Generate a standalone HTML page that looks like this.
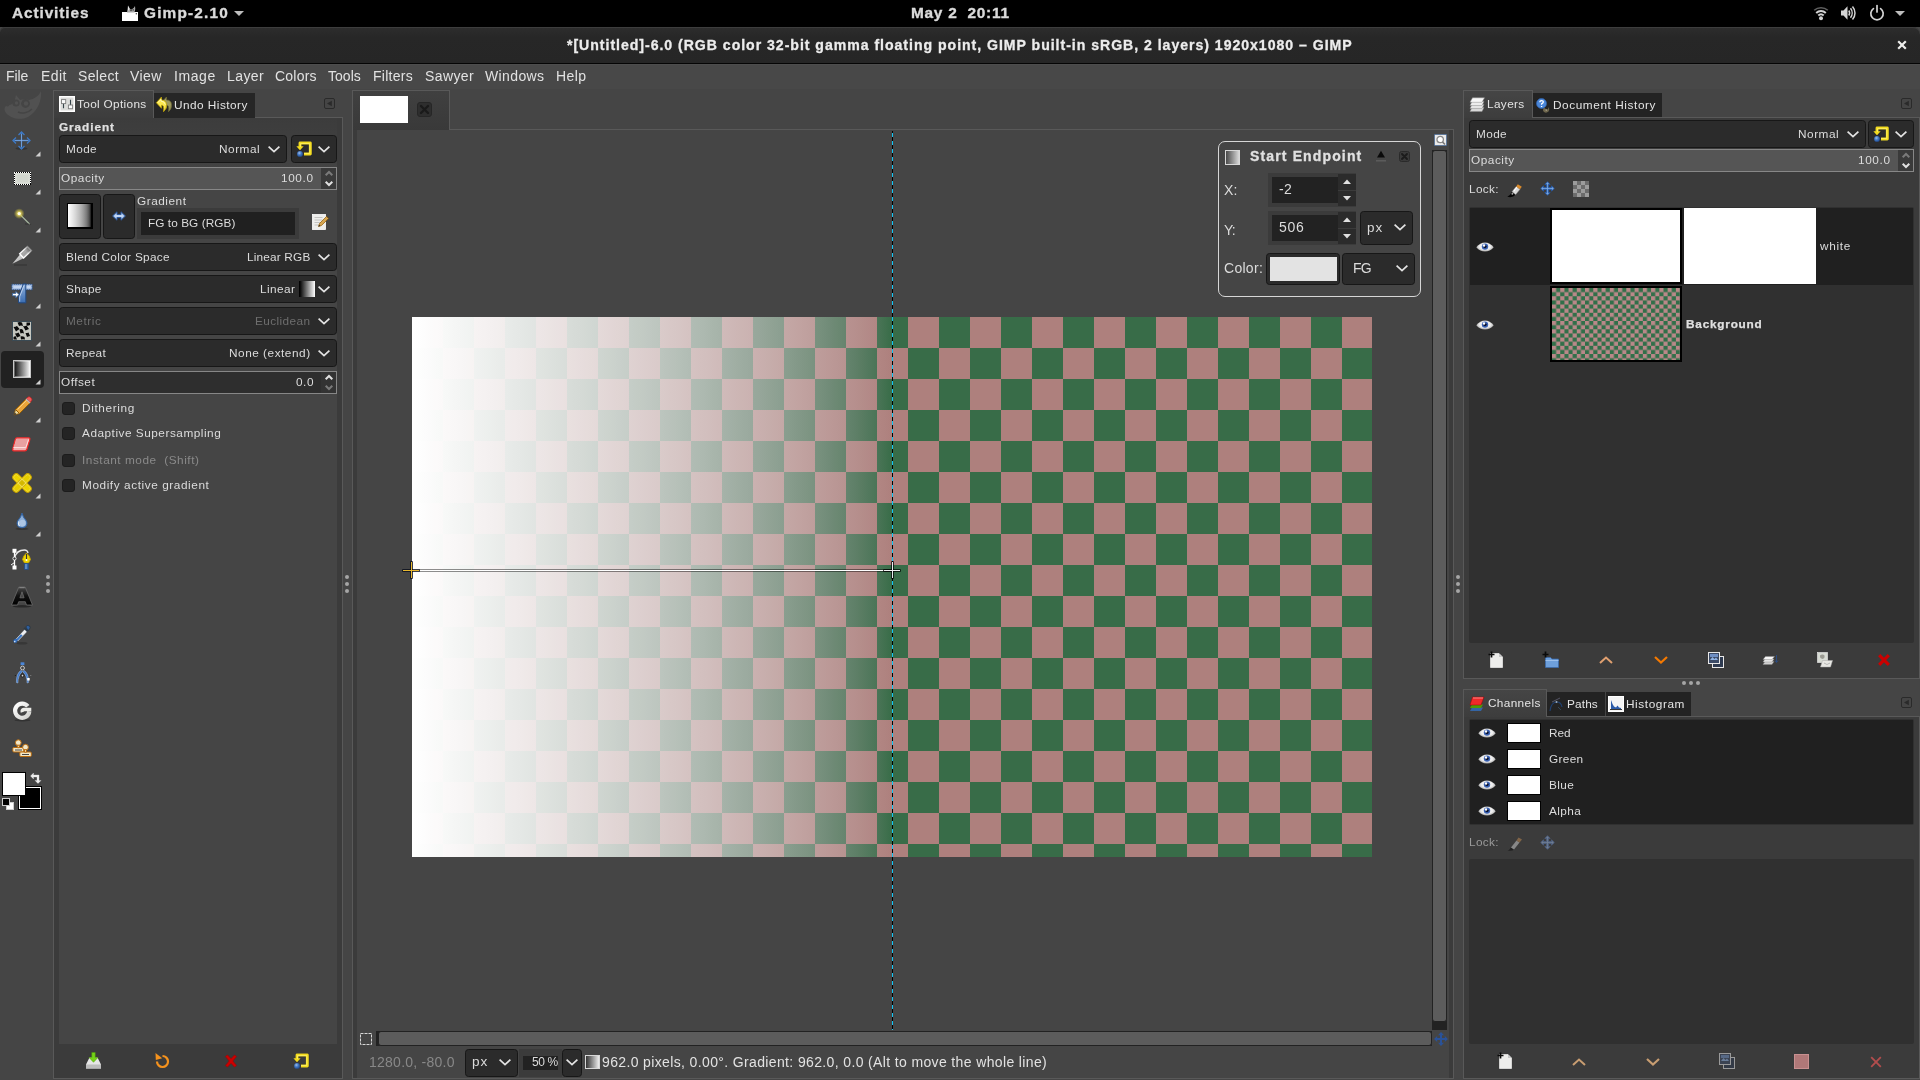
<!DOCTYPE html>
<html><head><meta charset="utf-8"><title>GIMP</title>
<style>
html,body{margin:0;padding:0;}
body{width:1920px;height:1080px;overflow:hidden;background:#454545;position:relative;font-family:"Liberation Sans",sans-serif;}
div,span.t,svg{position:absolute;box-sizing:border-box;}
span.t{white-space:pre;will-change:transform;}
svg{overflow:visible;}
.pk{background:linear-gradient(90deg,rgb(255,255,255) 0px,rgb(254,254,254) 6px,rgb(253,253,253) 12px,rgb(252,251,251) 18px,rgb(252,250,250) 24px,rgb(251,249,249) 30px,rgb(250,248,248) 36px,rgb(249,247,247) 42px,rgb(248,246,246) 48px,rgb(247,245,245) 54px,rgb(247,244,243) 60px,rgb(246,242,242) 66px,rgb(245,241,241) 72px,rgb(244,240,240) 78px,rgb(243,239,239) 84px,rgb(242,238,237) 90px,rgb(241,236,236) 96px,rgb(241,235,235) 102px,rgb(240,234,234) 108px,rgb(239,233,232) 114px,rgb(238,231,231) 120px,rgb(237,230,230) 126px,rgb(236,229,229) 132px,rgb(235,228,227) 138px,rgb(234,226,226) 144px,rgb(234,225,225) 150px,rgb(233,224,223) 156px,rgb(232,223,222) 162px,rgb(231,221,221) 168px,rgb(230,220,219) 174px,rgb(229,219,218) 180px,rgb(228,217,217) 186px,rgb(227,216,215) 192px,rgb(226,214,214) 198px,rgb(225,213,212) 204px,rgb(224,212,211) 210px,rgb(223,210,210) 216px,rgb(222,209,208) 222px,rgb(221,207,207) 228px,rgb(220,206,205) 234px,rgb(219,204,204) 240px,rgb(218,203,202) 246px,rgb(217,202,201) 252px,rgb(216,200,199) 258px,rgb(215,199,198) 264px,rgb(214,197,196) 270px,rgb(213,195,194) 276px,rgb(212,194,193) 282px,rgb(211,192,191) 288px,rgb(210,191,190) 294px,rgb(209,189,188) 300px,rgb(208,187,186) 306px,rgb(207,186,185) 312px,rgb(206,184,183) 318px,rgb(205,182,181) 324px,rgb(204,181,179) 330px,rgb(203,179,178) 336px,rgb(202,177,176) 342px,rgb(201,175,174) 348px,rgb(199,174,172) 354px,rgb(198,172,170) 360px,rgb(197,170,168) 366px,rgb(196,168,166) 372px,rgb(195,166,164) 378px,rgb(194,164,162) 384px,rgb(193,162,160) 390px,rgb(191,160,158) 396px,rgb(190,158,156) 402px,rgb(189,156,154) 408px,rgb(188,154,152) 414px,rgb(187,152,150) 420px,rgb(185,150,148) 426px,rgb(184,148,145) 432px,rgb(183,145,143) 438px,rgb(182,143,141) 444px,rgb(180,141,138) 450px,rgb(179,138,136) 456px,rgb(178,136,133) 462px,rgb(177,133,130) 468px,rgb(175,131,128) 474px,rgb(174,128,125) 480px,rgb(174,128,125) 481px);}
.gr{background:linear-gradient(90deg,rgb(255,255,255) 0px,rgb(253,254,253) 6px,rgb(252,252,252) 12px,rgb(251,251,251) 18px,rgb(249,250,249) 24px,rgb(248,249,248) 30px,rgb(247,248,247) 36px,rgb(245,246,245) 42px,rgb(244,245,244) 48px,rgb(242,244,243) 54px,rgb(241,243,241) 60px,rgb(239,241,240) 66px,rgb(238,240,238) 72px,rgb(236,239,237) 78px,rgb(235,237,235) 84px,rgb(233,236,234) 90px,rgb(232,235,233) 96px,rgb(230,233,231) 102px,rgb(229,232,230) 108px,rgb(227,231,228) 114px,rgb(226,229,227) 120px,rgb(224,228,225) 126px,rgb(223,227,223) 132px,rgb(221,225,222) 138px,rgb(219,224,220) 144px,rgb(218,222,219) 150px,rgb(216,221,217) 156px,rgb(214,219,215) 162px,rgb(213,218,214) 168px,rgb(211,217,212) 174px,rgb(209,215,211) 180px,rgb(207,214,209) 186px,rgb(206,212,207) 192px,rgb(204,211,205) 198px,rgb(202,209,204) 204px,rgb(200,207,202) 210px,rgb(198,206,200) 216px,rgb(196,204,198) 222px,rgb(195,203,196) 228px,rgb(193,201,195) 234px,rgb(191,199,193) 240px,rgb(189,198,191) 246px,rgb(187,196,189) 252px,rgb(185,194,187) 258px,rgb(183,193,185) 264px,rgb(180,191,183) 270px,rgb(178,189,181) 276px,rgb(176,187,179) 282px,rgb(174,186,177) 288px,rgb(172,184,175) 294px,rgb(169,182,172) 300px,rgb(167,180,170) 306px,rgb(165,178,168) 312px,rgb(162,176,166) 318px,rgb(160,174,163) 324px,rgb(157,172,161) 330px,rgb(155,170,159) 336px,rgb(152,168,156) 342px,rgb(150,166,154) 348px,rgb(147,164,151) 354px,rgb(144,162,148) 360px,rgb(141,160,146) 366px,rgb(138,158,143) 372px,rgb(135,156,140) 378px,rgb(132,153,137) 384px,rgb(129,151,134) 390px,rgb(126,149,131) 396px,rgb(122,146,128) 402px,rgb(119,144,125) 408px,rgb(115,141,122) 414px,rgb(111,138,118) 420px,rgb(107,136,114) 426px,rgb(103,133,111) 432px,rgb(98,130,107) 438px,rgb(94,127,103) 444px,rgb(89,124,98) 450px,rgb(83,121,94) 456px,rgb(78,118,89) 462px,rgb(71,115,84) 468px,rgb(64,112,78) 474px,rgb(56,108,72) 480px,rgb(56,108,72) 481px);-webkit-mask-image:repeating-conic-gradient(#000 0 25%,transparent 0 50%);mask-image:repeating-conic-gradient(#000 0 25%,transparent 0 50%);-webkit-mask-size:62px 62px;mask-size:62px 62px;}
</style></head><body>
<div style="left:0px;top:0px;width:1920px;height:27px;background:#000;"></div>
<span class="t" style="top:3.00px;font-size:15.4px;line-height:20px;color:#dadada;letter-spacing:0.891px;font-weight:bold;-webkit-text-stroke:0.35px #dadada;left:12px;">Activities</span>
<span class="t" style="top:3.00px;font-size:15.4px;line-height:20px;color:#dadada;letter-spacing:1.182px;font-weight:bold;-webkit-text-stroke:0.35px #dadada;left:144px;">Gimp-2.10</span>
<span class="t" style="top:3.00px;font-size:15.4px;line-height:20px;color:#dadada;letter-spacing:0.742px;font-weight:bold;-webkit-text-stroke:0.35px #dadada;left:910.62px;">May 2  20:11</span>
<svg style="left:122px;top:5px;" width="17" height="17" viewBox="0 0 17 17"><path d="M0 7h16v9H0z" fill="#fff"/><path d="M5 7.500q0-2.500 3-3.500l1.500.5q2.500-1 3.500-3.500.8 3-.5 6.500z" fill="#a8a8a8"/><path d="M6 .5l2 3.500-2.500 2.200z" fill="#e8e8e8"/><circle cx="9" cy="5.300" r="1" fill="#555"/><circle cx="11.200" cy="4.800" r=".9" fill="#555"/><circle cx="14.300" cy="8.700" r=".7" fill="#333"/></svg>
<svg style="left:234px;top:11px;" width="10" height="5" viewBox="0 0 10 5"><path d="M0 0h10l-5 5z" fill="#bdbdbd"/></svg>
<svg style="left:1813px;top:6px;" width="16" height="14" viewBox="0 0 16 14"><path d="M1.200 4.300a10 10 0 0 1 13.600 0" fill="none" stroke="#d4d4d4" stroke-width="1.500" opacity=".45"/><path d="M3.200 7a7 7 0 0 1 9.600 0" fill="none" stroke="#d4d4d4" stroke-width="2"/><path d="M5.300 9.500a4 4 0 0 1 5.400 0" fill="none" stroke="#d4d4d4" stroke-width="2"/><circle cx="8" cy="12.300" r="2" fill="#d4d4d4"/></svg>
<svg style="left:1841px;top:5px;" width="16" height="16" viewBox="0 0 16 16"><path d="M0 5.500h2.500l4-4.200v13.400l-4-4.200H0z" fill="#d4d4d4"/><path d="M7.800 5.500a4.500 4.500 0 0 1 0 5M9.500 3.300a7.500 7.500 0 0 1 0 9.400M11.500 1.400a10 10 0 0 1 0 13.200" fill="none" stroke="#d4d4d4" stroke-width="1.500"/></svg>
<svg style="left:1869px;top:5px;" width="16" height="16" viewBox="0 0 16 16"><path d="M4.400 3.600a6.200 6.200 0 1 0 7.200 0" fill="none" stroke="#d4d4d4" stroke-width="1.700" stroke-linecap="round"/><path d="M8 .6v6.400" stroke="#d4d4d4" stroke-width="1.700" stroke-linecap="round"/></svg>
<svg style="left:1895px;top:11px;" width="10" height="5" viewBox="0 0 10 5"><path d="M0 0h10l-5 5z" fill="#bdbdbd"/></svg>
<div style="left:0px;top:27px;width:1920px;height:37px;background:linear-gradient(#2d2d2d,#272727 30%,#262626);border-top-left-radius:5px;border-top-right-radius:7px;border-bottom:1px solid #050505;box-shadow:inset 0 1px 0 #3d3d3d;"></div>
<span class="t" style="top:35.00px;font-size:14.1px;line-height:20px;color:#ececec;letter-spacing:0.971px;font-weight:bold;-webkit-text-stroke:0.3px #ececec;left:567.18px;">*[Untitled]-6.0 (RGB color 32-bit gamma floating point, GIMP built-in sRGB, 2 layers) 1920x1080 – GIMP</span>
<svg style="left:1897px;top:40px;" width="10" height="10" viewBox="0 0 10 10"><path d="M1.2 1.2l7.6 7.6M8.8 1.2l-7.6 7.6" stroke="#eeeeec" stroke-width="2.2" stroke-linecap="butt"/></svg>
<div style="left:0px;top:64px;width:1920px;height:25px;background:#484848;border-top:1px solid #4d4d4d;"></div>
<span class="t" style="top:66.00px;font-size:14px;line-height:20px;color:#e2e2e2;letter-spacing:-0.062px;left:6px;">File</span>
<span class="t" style="top:66.00px;font-size:14px;line-height:20px;color:#e2e2e2;letter-spacing:0.422px;left:41px;">Edit</span>
<span class="t" style="top:66.00px;font-size:14px;line-height:20px;color:#e2e2e2;letter-spacing:0.367px;left:78px;">Select</span>
<span class="t" style="top:66.00px;font-size:14px;line-height:20px;color:#e2e2e2;letter-spacing:0.387px;left:130px;">View</span>
<span class="t" style="top:66.00px;font-size:14px;line-height:20px;color:#e2e2e2;letter-spacing:0.566px;left:174px;">Image</span>
<span class="t" style="top:66.00px;font-size:14px;line-height:20px;color:#e2e2e2;letter-spacing:0.428px;left:227px;">Layer</span>
<span class="t" style="top:66.00px;font-size:14px;line-height:20px;color:#e2e2e2;letter-spacing:0.214px;left:275px;">Colors</span>
<span class="t" style="top:66.00px;font-size:14px;line-height:20px;color:#e2e2e2;letter-spacing:0.031px;left:328px;">Tools</span>
<span class="t" style="top:66.00px;font-size:14px;line-height:20px;color:#e2e2e2;letter-spacing:0.261px;left:373px;">Filters</span>
<span class="t" style="top:66.00px;font-size:14px;line-height:20px;color:#e2e2e2;letter-spacing:0.404px;left:425px;">Sawyer</span>
<span class="t" style="top:66.00px;font-size:14px;line-height:20px;color:#e2e2e2;letter-spacing:0.386px;left:485px;">Windows</span>
<span class="t" style="top:66.00px;font-size:14px;line-height:20px;color:#e2e2e2;letter-spacing:0.398px;left:556px;">Help</span>
<svg style="left:2px;top:90px;" width="42" height="30" viewBox="0 0 42 30"><g fill="#515151"><path d="M39 1c1 9-3 20-13 26-8 4-18 1-22-4-3-4-1-8 3-8 3 0 5-3 6-6l1-4 4 5c3-1 6-1 9 0 5-1 10-4 12-9z"/></g><g fill="#454545"><circle cx="14" cy="13" r="3.6"/><circle cx="23.5" cy="13.5" r="4.4"/><circle cx="5.5" cy="14.5" r="2"/></g><g fill="#515151"><circle cx="14.5" cy="13" r="1.7"/><circle cx="24" cy="13.5" r="2.2"/></g><path d="M16 22c4 2 10 1 14-3" stroke="#454545" stroke-width="1.6" fill="none"/></svg>
<svg style="left:12px;top:131px;" width="19" height="19" viewBox="0 0 19 19"><ellipse cx="9.5" cy="17.6" rx="6" ry="1.4" fill="#2a2a2a" opacity=".6"/><g fill="none" stroke="#3d78c4" stroke-width="1.3" stroke-linejoin="miter"><path d="M9.5 1v17M1 9.5h17"/><path d="M6.5 4l3-3 3 3M6.5 15l3 3 3-3M4 6.5l-3 3 3 3M15 6.5l3 3-3 3"/></g><g stroke="#9cc0ee" stroke-width=".5" fill="none"><path d="M9.5 3v13M3 9.5h13"/></g></svg>
<svg style="left:34.8px;top:150.8px;" width="6" height="6" viewBox="0 0 6 6"><path d="M5.5 0.5v5h-5z" fill="#d0d0d0"/></svg>
<svg style="left:14px;top:172px;" width="17" height="13" viewBox="0 0 17 13"><g shape-rendering="crispEdges"><rect x="1" y="1" width="15" height="11" fill="#d3d7cf"/><rect x=".5" y=".5" width="16" height="12" fill="none" stroke="#fff" stroke-width="1"/><rect x=".5" y=".5" width="16" height="12" fill="none" stroke="#000" stroke-width="1" stroke-dasharray="1 1"/></g><rect x="2" y="2" width="13" height="9" fill="none" stroke="#eef0ea" stroke-width=".8" opacity=".6"/></svg>
<svg style="left:34.8px;top:188.8px;" width="6" height="6" viewBox="0 0 6 6"><path d="M5.5 0.5v5h-5z" fill="#d0d0d0"/></svg>
<svg style="left:12px;top:206px;" width="20" height="20" viewBox="0 0 20 20"><defs><radialGradient id="wg"><stop offset="0" stop-color="#fffbe0"/><stop offset=".3" stop-color="#f0e060" stop-opacity=".9"/><stop offset="1" stop-color="#d0c030" stop-opacity="0"/></radialGradient></defs><path d="M8 8.5l10 10" stroke="#a8b8a0" stroke-width="1.1"/><path d="M13 17.8l6 .6" stroke="#2c2c2c" stroke-width="1.2" opacity=".6"/><circle cx="7.2" cy="7.6" r="5.4" fill="url(#wg)"/><circle cx="7.2" cy="7.6" r="1.6" fill="#fffef0"/></svg>
<svg style="left:34.8px;top:226.8px;" width="6" height="6" viewBox="0 0 6 6"><path d="M5.5 0.5v5h-5z" fill="#d0d0d0"/></svg>
<svg style="left:11px;top:246px;" width="22" height="20" viewBox="0 0 22 20"><defs><linearGradient id="sh" x1="0" y1="1" x2="1" y2="0"><stop offset="0" stop-color="#fff" stop-opacity="1"/><stop offset=".55" stop-color="#fff" stop-opacity=".9"/><stop offset="1" stop-color="#fff" stop-opacity="0"/></linearGradient><linearGradient id="sb" x1="0" y1="0" x2="1" y2="1"><stop offset="0" stop-color="#f4f4f4"/><stop offset="1" stop-color="#9a9a9a"/></linearGradient></defs><path d="M3 19h13" stroke="#2c2c2c" stroke-width="1.400" opacity=".55"/><path d="M1.400 17.700L9.200 8.300l3.800 3.700z" fill="url(#sb)"/><path d="M8.700 7.800L16.500 .4l4 4.100-7.900 7.500z" fill="url(#sh)" opacity=".55"/><path d="M8.700 7.800L16.500 .4l4 4.100-7.900 7.500z" fill="none" stroke="url(#sh)" stroke-width="1.400"/><path d="M12 7.500l3.500-3.300M13.800 9.300l3.500-3.300" stroke="#bbb" stroke-width=".9" opacity=".7"/></svg>
<svg style="left:11px;top:283px;" width="22" height="21" viewBox="0 0 22 21"><defs><linearGradient id="tg" x1="0" y1="0" x2="0" y2="1"><stop offset="0" stop-color="#8fb0dc"/><stop offset="1" stop-color="#3a6cb0"/></linearGradient></defs><rect x=".8" y="1.200" width="20.400" height="5.600" fill="#9db7e0" stroke="#204a87" stroke-width="1" stroke-dasharray="1 1"/><rect x="2.300" y="2.700" width="17.400" height="2.600" fill="#c4d6f0"/><path d="M12.300 1h2.500v18.800H7.600v-6.300z" fill="url(#tg)" stroke="#204a87" stroke-width="1"/><path d="M13 2.500L8.700 13.700v5" fill="none" stroke="#d0def2" stroke-width=".8"/><path d="M1.500 10.400h3.300v-2l3.200 3.200-3.200 3.200v-2H1.500z" fill="#fff" stroke="#3465a4" stroke-width=".8"/></svg>
<svg style="left:34.8px;top:302.8px;" width="6" height="6" viewBox="0 0 6 6"><path d="M5.5 0.5v5h-5z" fill="#d0d0d0"/></svg>
<svg style="left:12px;top:321px;" width="20" height="20" viewBox="0 0 20 20"><rect x=".5" y=".5" width="19" height="19" fill="#c4c6bf" stroke="#3a4a54"/><g fill="#0a0a0a"><path d="M5.5 1.5q2.5-1 4.5 0l1 3.5q-2-1-4 0z"/><path d="M1.5 6q2 0 3.500-1l2.500 3q-2 1-3.500 2.500z"/><path d="M11 5q2 .5 3.500-.5l2.500 3.500q-2 .5-3.500 1.500z"/><path d="M7.500 8.500q2-1 3.500.5l1 3.500q-2-1-3.500 0z"/><path d="M3 12.500q2 0 3.500-1l2 3.500q-2 .5-3.500 1.500z"/><path d="M13.500 12q2 0 3-.5l1.500 3.500q-2 .5-3 1z"/><path d="M8.500 15.500q2-.5 4 .5l.5 2.500q-2-.5-4 0z"/><path d="M14.500 1.500l3.500 0 0 2.500q-2 1-3.500 .5z"/><path d="M1.500 16l2-1 1.500 3.500-3.500 0z"/></g></svg>
<svg style="left:34.8px;top:340.8px;" width="6" height="6" viewBox="0 0 6 6"><path d="M5.5 0.5v5h-5z" fill="#d0d0d0"/></svg>
<div style="left:0.5px;top:350.5px;width:43px;height:37px;background:#212121;border-radius:4px;"></div>
<svg style="left:13px;top:360px;" width="18" height="18" viewBox="0 0 18 18"><defs><linearGradient id="gg"><stop offset="0" stop-color="#050505"/><stop offset="1" stop-color="#ffffff"/></linearGradient></defs><rect x=".5" y=".5" width="17" height="17" fill="url(#gg)" stroke="#c8c8c8"/><rect x="1.500" y="1.500" width="15" height="15" fill="none" stroke="#fff" stroke-opacity=".35"/></svg>
<svg style="left:34.8px;top:378.8px;" width="6" height="6" viewBox="0 0 6 6"><path d="M5.5 0.5v5h-5z" fill="#d0d0d0"/></svg>
<svg style="left:13px;top:396px;" width="20" height="20" viewBox="0 0 20 20"><path d="M1 19l1.500-5.500 4 4z" fill="#e8d8a0" stroke="#8f5902" stroke-width=".8"/><path d="M1 19l.8-2.500 1.700 1.700z" fill="#333"/><path d="M2.500 13.500L13.500 2.500l4 4L6.500 17.500z" fill="#e9a53a" stroke="#8f5902" stroke-width=".9"/><path d="M4.500 13.500L14 4" stroke="#f6cf82" stroke-width="1"/><path d="M13.500 2.500l1.500-1.500q1.500-.8 3 .8 1.500 1.600.6 3l-1.600 1.600z" fill="#ef5a5a" stroke="#c02020" stroke-width=".7"/><path d="M13 3l4 4" stroke="#b8b8b8" stroke-width="1.200"/></svg>
<svg style="left:34.8px;top:416.8px;" width="6" height="6" viewBox="0 0 6 6"><path d="M5.5 0.5v5h-5z" fill="#d0d0d0"/></svg>
<svg style="left:12px;top:437px;" width="19" height="16" viewBox="0 0 19 16"><path d="M5 .8h11.500q1.800 0 1.300 1.700l-2.800 9.500q-.5 1.800-2.200 1.800H1.800q-1.500 0-1-1.800l2.400-9.400q.4-1.800 1.800-1.800z" fill="#f0b0b0" stroke="#ef2929" stroke-width="1.200"/><path d="M4.800 2h11.500l-2.500 8H1.600z" fill="#e8a0a0" opacity=".9"/><path d="M1.400 10.500h12.400l2.800-8" fill="none" stroke="#fbdcdc" stroke-width="1"/></svg>
<svg style="left:12px;top:473px;" width="20" height="20" viewBox="0 0 20 20"><g stroke="#c4a000" stroke-width="1"><rect x="-1.600" y="6.500" width="23.200" height="7" rx="3.500" fill="#edd400" transform="rotate(45 10 10)"/><rect x="-1.600" y="6.500" width="23.200" height="7" rx="3.500" fill="#e6cd00" transform="rotate(-45 10 10)"/></g><rect x="7" y="7" width="6" height="6" fill="#d4b800" stroke="#f7e97a" stroke-width=".7" transform="rotate(45 10 10)"/><g stroke="#f7e97a" stroke-width=".6" opacity=".7" fill="none"><rect x="-.6" y="7.500" width="21.200" height="5" rx="2.500" transform="rotate(45 10 10)"/><rect x="-.6" y="7.500" width="21.200" height="5" rx="2.500" transform="rotate(-45 10 10)"/></g></svg>
<svg style="left:34.8px;top:492.8px;" width="6" height="6" viewBox="0 0 6 6"><path d="M5.5 0.5v5h-5z" fill="#d0d0d0"/></svg>
<svg style="left:15px;top:512px;" width="14" height="18" viewBox="0 0 14 18"><ellipse cx="7" cy="16.800" rx="6.500" ry="1.200" fill="#2a2a2a" opacity=".6"/><path d="M7 1q.8 4 4 7.500 2 3-.5 6-3.500 2.500-7 0-2.500-3-.5-6 3.200-3.500 4-7.500z" fill="#8fb0d8" stroke="#3465a4" stroke-width="1.100"/><path d="M4 9.500q-1.200 2.500.5 4.500" stroke="#e6f0fb" stroke-width="1.200" fill="none"/><ellipse cx="7.500" cy="11" rx="3" ry="3.200" fill="#b8cfea" opacity=".7"/></svg>
<svg style="left:34.8px;top:530.8px;" width="6" height="6" viewBox="0 0 6 6"><path d="M5.5 0.5v5h-5z" fill="#d0d0d0"/></svg>
<svg style="left:11px;top:548px;" width="22" height="22" viewBox="0 0 22 22"><path d="M3.500 2v18" stroke="#fff" stroke-width="1.300"/><path d="M3.500 10q2-8 10-8 3 0 3.500 3" fill="none" stroke="#e8e8e8" stroke-width="1.300"/><rect x="1.500" y=".8" width="4" height="4" fill="#fff"/><rect x="1.500" y="17.500" width="4" height="4" fill="#fff"/><circle cx="3.500" cy="10.500" r="1.600" fill="#333" stroke="#fff" stroke-width=".9"/><path d="M0 17l3.500-2.500" stroke="#fff" stroke-width="1"/><path d="M15.500 5q3.500 3 4 6.500l-2 3.500h-4l-2-3.500q.5-3.500 4-6.500z" fill="#edd400" stroke="#c4a000" stroke-width=".9"/><path d="M15.500 6v6" stroke="#333" stroke-width="1.100"/><circle cx="15.500" cy="12" r="1" fill="#fff"/><rect x="13.400" y="15.500" width="4.200" height="6" fill="#3465a4" stroke="#204a87" stroke-width=".6"/><path d="M15 16v5" stroke="#9cc0ee" stroke-width=".8"/></svg>
<svg style="left:11px;top:586px;" width="22" height="22" viewBox="0 0 22 22"><defs><linearGradient id="ag" x1="0" y1="0" x2="0" y2="1"><stop offset="0" stop-color="#4a4a4a"/><stop offset=".5" stop-color="#111"/><stop offset="1" stop-color="#000"/></linearGradient></defs><ellipse cx="11" cy="20.300" rx="9.500" ry="1.300" fill="#1c1c1c" opacity=".7"/><path d="M7.800 1h6.400l7.300 18h-6l-1.200-3.300H7.700L6.500 19H.5z M11 5.800l-2.100 6h4.200z" fill="url(#ag)" stroke="#6a6a6a" stroke-width=".8" fill-rule="evenodd"/><path d="M8.300 1.700h5.400" stroke="#999" stroke-width=".8"/></svg>
<svg style="left:12px;top:624px;" width="19" height="21" viewBox="0 0 19 21"><ellipse cx="10" cy="19.300" rx="5.500" ry="1.300" fill="#2a2a2a" opacity=".5"/><path d="M4 15.200L12.800 5.800l1.900 1.800L5.800 17z" fill="#3b78c8" stroke="#d0d0d0" stroke-width=".8"/><path d="M8.800 10l4-4.200 1.900 1.800-4 4.200z" fill="#f0f0f0"/><path d="M11.500 4.500l1.300-1.200 3.500 3.400-1.200 1.300z" fill="#2c3a48"/><path d="M13.800 2.800q1.800-2.300 3.800-.8 1.500 1.800-.6 3.800l-1 .8z" fill="#2f5f9e" stroke="#23313f" stroke-width=".7"/><path d="M2.300 15.500q1.300-1.200 2.300-.2 1.200 1.200.3 2.600-1.300 1.400-2.800.5-1.200-1.200-.1-2.900z" fill="#3b78c8" stroke="#204a87" stroke-width=".5"/><circle cx="2.700" cy="17.600" r=".8" fill="#cfe0f5"/></svg>
<svg style="left:14.5px;top:662px;" width="18" height="22" viewBox="0 0 18 22"><rect x="5.600" y=".3" width="3.800" height="2.800" fill="#4a86d8"/><circle cx="7.500" cy="6" r="1.900" fill="#444" stroke="#d8d8d8" stroke-width=".9"/><path d="M6.200 8.300Q1.200 11 1.400 20.500l1.500.5q0-7.500 4.300-11.300z" fill="#3f78c8" stroke="#a8c4ea" stroke-width=".5"/><path d="M8.800 8.300q5 2.700 4.800 12.200l-1.500.5q0-7.500-4.300-11.300z" fill="#3f78c8" stroke="#a8c4ea" stroke-width=".5"/><circle cx="7.500" cy="13.600" r="2" fill="#1c1c1c"/><rect x="6.700" y="12.700" width="1.600" height="1.800" fill="#ddd"/><rect x="12.200" y="16" width="2.500" height="2.500" fill="#fff"/><circle cx=".3" cy="13.500" r=".5" fill="#111"/><circle cx="15.800" cy="13.500" r=".5" fill="#999"/></svg>
<svg style="left:12px;top:701px;" width="20" height="21" viewBox="0 0 20 21"><defs><linearGradient id="gl" x1="0" y1="0" x2="1" y2="1"><stop offset="0" stop-color="#ffffff"/><stop offset="1" stop-color="#d2d2ce"/></linearGradient></defs><ellipse cx="10.500" cy="19.300" rx="8" ry="1.100" fill="#262626" opacity=".6"/><path d="M15.800 5.300A7.100 7.100 0 1 0 17.300 10.300" fill="none" stroke="url(#gl)" stroke-width="4.200"/><path d="M19.300 8.500H12q-2.300 .3-1.500 2.600" fill="none" stroke="#ecece8" stroke-width="3.700"/></svg>
<svg style="left:12px;top:739px;" width="21" height="19" viewBox="0 0 21 19"><g stroke="#b8690a" stroke-width="1" fill="#f2e8c8"><rect x=".8" y="8.500" width="11" height="4.500" rx="1"/><circle cx="6.300" cy="3.700" r="2.900"/><path d="M5.300 6.200h2v2.500h-2z"/><rect x="7.800" y="13" width="11.500" height="4.500" rx="1"/><circle cx="13.500" cy="8.200" r="2.900"/><path d="M12.500 10.700h2v2.500h-2z"/></g><path d="M3 11h7M10 15.500h7" stroke="#333" stroke-width=".9"/></svg>
<div style="left:18px;top:786px;width:24px;height:24px;background:#000;border:1px solid #000;box-shadow:inset 0 0 0 1px #fff;"></div>
<div style="left:2px;top:772px;width:24px;height:24px;background:#fff;border:1px solid #000;"></div>
<svg style="left:30px;top:772px;" width="12" height="12" viewBox="0 0 12 12"><path d="M3.500 1L.5 4l3 3V5h3.500v3.500H5l3 3 3-3H9V3H3.500z" fill="#eee" stroke="#eee" stroke-width=".3"/></svg>
<div style="left:6px;top:802px;width:8px;height:8px;background:#fff;border:1px solid #ccc;"></div>
<div style="left:2px;top:798px;width:8px;height:8px;background:#000;border:1px solid #ccc;"></div>
<div style="left:46px;top:575px;width:4px;height:4px;background:#a6a6a6;border-radius:2px;"></div>
<div style="left:46px;top:582px;width:4px;height:4px;background:#a6a6a6;border-radius:2px;"></div>
<div style="left:46px;top:589px;width:4px;height:4px;background:#a6a6a6;border-radius:2px;"></div>
<div style="left:345px;top:575px;width:4px;height:4px;background:#a6a6a6;border-radius:2px;"></div>
<div style="left:345px;top:582px;width:4px;height:4px;background:#a6a6a6;border-radius:2px;"></div>
<div style="left:345px;top:589px;width:4px;height:4px;background:#a6a6a6;border-radius:2px;"></div>
<div style="left:1456px;top:575px;width:4px;height:4px;background:#a6a6a6;border-radius:2px;"></div>
<div style="left:1456px;top:582px;width:4px;height:4px;background:#a6a6a6;border-radius:2px;"></div>
<div style="left:1456px;top:589px;width:4px;height:4px;background:#a6a6a6;border-radius:2px;"></div>
<div style="left:53px;top:117px;width:290px;height:962px;background:#3b3b3b;border:1px solid #595959;"></div>
<div style="left:53px;top:90px;width:101px;height:28px;background:#3e3e3e;border:1px solid #595959;border-bottom:none;background:linear-gradient(#454545,#3d3d3d);"></div>
<div style="left:154px;top:92.5px;width:100.5px;height:25px;background:#262626;"></div>
<svg style="left:59px;top:96px;" width="16" height="16" viewBox="0 0 16 16"><rect width="16" height="16" fill="#fff"/><rect x="1.500" y="1.500" width="13" height="13" fill="#dcdcda"/><path d="M4.500 7.500v4.800M11.500 3.800v5.400" stroke="#35434a" stroke-width="1.100"/><rect x="2.500" y="3.600" width="4.200" height="4" fill="#fafafa" stroke="#7e7e7e" stroke-width=".9"/><rect x="9.400" y="9" width="4.200" height="3.700" fill="#fafafa" stroke="#7e7e7e" stroke-width=".9"/></svg>
<span class="t" style="top:94.00px;font-size:11.8px;line-height:20px;color:#e4e4e4;letter-spacing:0.336px;left:77px;">Tool Options</span>
<svg style="left:156px;top:96px;" width="17" height="17" viewBox="0 0 17 17"><path d="M.3 6.700L5.500 1v3q4.600 0 5 4.500.3 4.500-3 7.200.8-3.700-.2-5.700-.5-.8-1.800-.8v3.100z" transform="translate(5 0)" fill="#9c985e" stroke="#6e6a30" stroke-width=".7"/><path d="M.3 6.700L5.500 1v3q4.600 0 5 4.500.3 4.500-3 7.200.8-3.700-.2-5.700-.5-.8-1.800-.8v3.100z" fill="#fce94f" stroke="#b89c00" stroke-width=".8"/><path d="M2 6.600l3-3.300v1.800q3.800.3 4.300 3.400" fill="none" stroke="#fffbd0" stroke-width=".8"/></svg>
<span class="t" style="top:95.00px;font-size:11.8px;line-height:20px;color:#e4e4e4;letter-spacing:0.469px;left:174px;">Undo History</span>
<svg style="left:324px;top:98px;" width="11" height="11" viewBox="0 0 11 11"><rect x=".5" y=".5" width="10" height="10" rx="1.500" fill="none" stroke="#2a2a2a"/><path d="M7.800 2.700v5.600l-4.800-2.800z" fill="#2a2a2a"/></svg>
<div style="left:59px;top:118px;width:278px;height:926px;background:linear-gradient(180deg,#3c3c3c 0,#3f3f3f 24px,#454545 64px);"></div>
<span class="t" style="top:117.00px;font-size:11.8px;line-height:20px;color:#e0e0e0;letter-spacing:0.926px;font-weight:bold;-webkit-text-stroke:0.25px #e0e0e0;left:59px;">Gradient</span>
<div style="left:59px;top:135px;width:228px;height:28px;background:#2b2b2b;border:1px solid #171717;border-radius:3.5px;"></div>
<span class="t" style="top:139.00px;font-size:11.8px;line-height:20px;color:#dcdcdc;letter-spacing:0.371px;left:66px;">Mode</span>
<span class="t" style="top:139.00px;font-size:11.8px;line-height:20px;color:#dcdcdc;letter-spacing:0.523px;left:219.33px;">Normal</span>
<svg style="left:267.5px;top:146.05px;" width="12" height="6.5" viewBox="0 0 12 6.5"><path d="M.6 .6L6.0 5.7L11.4 .6" fill="none" stroke="#e4e4e4" stroke-width="1.7"/></svg>
<div style="left:291px;top:135px;width:46px;height:28px;background:#2b2b2b;border:1px solid #171717;border-radius:3.5px;"></div>
<svg style="left:317.5px;top:146.05px;" width="12" height="6.5" viewBox="0 0 12 6.5"><path d="M.6 .6L6.0 5.7L11.4 .6" fill="none" stroke="#e4e4e4" stroke-width="1.7"/></svg>
<svg style="left:296px;top:141px;" width="16" height="16" viewBox="0 0 16 16"><defs><radialGradient id="bb" cx=".4" cy=".35" r=".7"><stop offset="0" stop-color="#9cbcea"/><stop offset=".5" stop-color="#3f74c0"/><stop offset="1" stop-color="#1f4a90"/></radialGradient></defs><path d="M8 13H14.300V2H4V6" fill="none" stroke="#1a2040" stroke-width="4" stroke-linejoin="round" opacity=".55"/><path d="M-.3 5h8.600L4 9.900z" fill="#1a2040" opacity=".55"/><path d="M8 13H14.300V2H4V6" fill="none" stroke="#f4dc1c" stroke-width="2.900" stroke-linejoin="round"/><path d="M.3 5.300h7.400L4 9.300z" fill="#f4dc1c"/><path d="M8 12.500H13.800V2.500H4.500V6" fill="none" stroke="#fdf06a" stroke-width="1" stroke-linejoin="round" opacity=".8"/><circle cx="4" cy="12.900" r="2.900" fill="url(#bb)"/></svg>
<div style="left:59px;top:167px;width:278px;height:23px;background:#555555;border:1px solid #878787;"></div>
<div style="left:321px;top:168px;width:15px;height:21px;background:#3a3a3a;"></div>
<span class="t" style="top:167.60px;font-size:11.8px;line-height:20px;color:#dcdcdc;letter-spacing:0.538px;left:61px;">Opacity</span>
<span class="t" style="top:167.60px;font-size:11.8px;line-height:20px;color:#dcdcdc;letter-spacing:0.609px;left:281.42px;">100.0</span>
<svg style="left:324.5px;top:171.25px;" width="8" height="5" viewBox="0 0 8 5"><path d="M.7 4.300L4 1l3.300 3.300" fill="none" stroke="#7a7a7a" stroke-width="2"/></svg>
<svg style="left:324.5px;top:180.75px;" width="8" height="5" viewBox="0 0 8 5"><path d="M.7 .7L4 4l3.300-3.300" fill="none" stroke="#e0e0e0" stroke-width="2"/></svg>
<div style="left:59px;top:194px;width:42px;height:45px;background:#2b2b2b;border:1px solid #171717;border-radius:3.5px;"></div>
<div style="left:67px;top:203px;width:26px;height:26px;background:linear-gradient(90deg,rgb(255,255,255) 0%,rgb(243,243,243) 10%,rgb(231,231,231) 20%,rgb(218,218,218) 30%,rgb(203,203,203) 40%,rgb(188,188,188) 50%,rgb(170,170,170) 60%,rgb(149,149,149) 70%,rgb(124,124,124) 80%,rgb(97,97,97) 88%,rgb(69,69,69) 94%,rgb(39,39,39) 98%,rgb(0,0,0) 100%);border:1px solid #000;border-right-width:2px;border-bottom-width:2px;"></div>
<div style="left:103px;top:194px;width:32px;height:45px;background:#2b2b2b;border:1px solid #171717;border-radius:3.5px;"></div>
<svg style="left:112px;top:210.5px;" width="14" height="10" viewBox="0 0 14 10"><path d="M.6 5L5 .8v2.600h4V.8L13.400 5 9 9.200V6.600H5v2.600z" fill="#a6c2ea" stroke="#2a58a0" stroke-width="1"/><path d="M3 5h8" stroke="#dce9f9" stroke-width="1"/></svg>
<span class="t" style="top:191.00px;font-size:11.8px;line-height:20px;color:#dcdcdc;letter-spacing:0.533px;left:136.8px;">Gradient</span>
<div style="left:137px;top:208px;width:162px;height:31px;background:#3b3b3b;"></div>
<div style="left:141px;top:212px;width:154px;height:23px;background:#202020;"></div>
<span class="t" style="top:213.00px;font-size:11.8px;line-height:20px;color:#dcdcdc;letter-spacing:0.066px;left:148px;">FG to BG (RGB)</span>
<svg style="left:311px;top:213px;" width="19" height="18" viewBox="0 0 19 18"><rect x="1.500" y="1.500" width="13" height="15" fill="#eeeeec" stroke="#fff" stroke-width=".8"/><path d="M3.500 4.500h8M3.500 7h8M3.500 9.500h6M3.500 12h4" stroke="#b8b8b8" stroke-width=".8"/><path d="M7.500 13.500l1-3 7-7 2 2-7 7z" fill="#d6a550" stroke="#8f5902" stroke-width=".7"/><path d="M7.500 13.500l.6-1.800 1.200 1.200z" fill="#222"/></svg>
<div style="left:59px;top:243px;width:278px;height:28px;background:#2b2b2b;border:1px solid #171717;border-radius:3.5px;"></div>
<span class="t" style="top:247.00px;font-size:11.8px;line-height:20px;color:#dcdcdc;letter-spacing:0.331px;left:66px;">Blend Color Space</span>
<span class="t" style="top:247.00px;font-size:11.8px;line-height:20px;color:#dcdcdc;letter-spacing:0.186px;left:247.00px;">Linear RGB</span>
<svg style="left:317.5px;top:254.05px;" width="12" height="6.5" viewBox="0 0 12 6.5"><path d="M.6 .6L6.0 5.7L11.4 .6" fill="none" stroke="#e4e4e4" stroke-width="1.7"/></svg>
<div style="left:59px;top:275px;width:278px;height:28px;background:#2b2b2b;border:1px solid #171717;border-radius:3.5px;"></div>
<span class="t" style="top:279.00px;font-size:11.8px;line-height:20px;color:#dcdcdc;letter-spacing:0.300px;left:66px;">Shape</span>
<svg style="left:317.5px;top:286.05px;" width="12" height="6.5" viewBox="0 0 12 6.5"><path d="M.6 .6L6.0 5.7L11.4 .6" fill="none" stroke="#e4e4e4" stroke-width="1.7"/></svg>
<span class="t" style="top:279.00px;font-size:11.8px;line-height:20px;color:#dcdcdc;letter-spacing:0.427px;left:259.64px;">Linear</span>
<div style="left:299px;top:281px;width:16px;height:16px;background:linear-gradient(90deg,#000 0,#050505 6%,#fff 100%);"></div>
<div style="left:59px;top:307px;width:278px;height:28px;background:#2b2b2b;border:1px solid #171717;border-radius:3.5px;"></div>
<span class="t" style="top:311.00px;font-size:11.8px;line-height:20px;color:#6e6e6e;letter-spacing:0.542px;left:66px;">Metric</span>
<span class="t" style="top:311.00px;font-size:11.8px;line-height:20px;color:#6e6e6e;letter-spacing:0.394px;left:255.12px;">Euclidean</span>
<svg style="left:317.5px;top:318.05px;" width="12" height="6.5" viewBox="0 0 12 6.5"><path d="M.6 .6L6.0 5.7L11.4 .6" fill="none" stroke="#e4e4e4" stroke-width="1.7"/></svg>
<div style="left:59px;top:339px;width:278px;height:28px;background:#2b2b2b;border:1px solid #171717;border-radius:3.5px;"></div>
<span class="t" style="top:343.00px;font-size:11.8px;line-height:20px;color:#dcdcdc;letter-spacing:0.333px;left:66px;">Repeat</span>
<span class="t" style="top:343.00px;font-size:11.8px;line-height:20px;color:#dcdcdc;letter-spacing:0.525px;left:228.91px;">None (extend)</span>
<svg style="left:317.5px;top:350.05px;" width="12" height="6.5" viewBox="0 0 12 6.5"><path d="M.6 .6L6.0 5.7L11.4 .6" fill="none" stroke="#e4e4e4" stroke-width="1.7"/></svg>
<div style="left:59px;top:371px;width:278px;height:23px;background:#2e2e2e;border:1px solid #878787;"></div>
<div style="left:321px;top:372px;width:15px;height:21px;background:#333;"></div>
<span class="t" style="top:371.60px;font-size:11.8px;line-height:20px;color:#dcdcdc;letter-spacing:0.487px;left:61px;">Offset</span>
<span class="t" style="top:371.60px;font-size:11.8px;line-height:20px;color:#dcdcdc;letter-spacing:0.562px;left:295.91px;">0.0</span>
<svg style="left:324.5px;top:375.25px;" width="8" height="5" viewBox="0 0 8 5"><path d="M.7 4.300L4 1l3.300 3.300" fill="none" stroke="#e0e0e0" stroke-width="2"/></svg>
<svg style="left:324.5px;top:384.75px;" width="8" height="5" viewBox="0 0 8 5"><path d="M.7 .7L4 4l3.300-3.300" fill="none" stroke="#7a7a7a" stroke-width="2"/></svg>
<div style="left:62px;top:402px;width:13px;height:13px;background:#242424;border:1px solid #1c1c1c;border-radius:3px;"></div>
<span class="t" style="top:397.50px;font-size:11.8px;line-height:20px;color:#dcdcdc;letter-spacing:0.627px;left:82px;">Dithering</span>
<div style="left:62px;top:427px;width:13px;height:13px;background:#242424;border:1px solid #1c1c1c;border-radius:3px;"></div>
<span class="t" style="top:422.50px;font-size:11.8px;line-height:20px;color:#dcdcdc;letter-spacing:0.516px;left:82px;">Adaptive Supersampling</span>
<div style="left:62px;top:454px;width:13px;height:13px;background:#242424;border:1px solid #1c1c1c;border-radius:3px;"></div>
<span class="t" style="top:450.00px;font-size:11.8px;line-height:20px;color:#8a8a8a;letter-spacing:0.534px;left:82px;">Instant mode  (Shift)</span>
<div style="left:62px;top:479px;width:13px;height:13px;background:#242424;border:1px solid #1c1c1c;border-radius:3px;"></div>
<span class="t" style="top:475.00px;font-size:11.8px;line-height:20px;color:#dcdcdc;letter-spacing:0.576px;left:82px;">Modify active gradient</span>
<svg style="left:85px;top:1052px;" width="17" height="17" viewBox="0 0 17 17"><path d="M4.500 5.500h8l3.500 7v4H1v-4z" fill="#e6e6e6"/><path d="M1 12.500h15v4H1z" fill="#bdbdbd"/><path d="M6.800 .5h3.400v5H13L8.500 10.300 4 5.500h2.800z" fill="#73d216" stroke="#4e9a06" stroke-width=".5"/></svg>
<svg style="left:154.5px;top:1052px;" width="15" height="17" viewBox="0 0 15 17"><path d="M2 9.500a5.500 5.500 0 1 0 5.500-5.500" fill="none" stroke="#f5921d" stroke-width="2.200"/><path d="M.5 1l.3 7 6.400-1.800z" fill="#f5921d"/></svg>
<svg style="left:224px;top:1054px;" width="14" height="14" viewBox="0 0 14 14"><path d="M1.500 2.500l2-1.500L7 4.800 10.500 1l2 1.500L8.800 7l3.700 4.500-2 1.500L7 9.200 3.500 13l-2-1.500L5.200 7z" fill="#cc0000" stroke="#a40000" stroke-width=".6"/></svg>
<svg style="left:293.3px;top:1053px;" width="16" height="16" viewBox="0 0 16 16"><defs><radialGradient id="bb" cx=".4" cy=".35" r=".7"><stop offset="0" stop-color="#9cbcea"/><stop offset=".5" stop-color="#3f74c0"/><stop offset="1" stop-color="#1f4a90"/></radialGradient></defs><path d="M8 13H14.300V2H4V6" fill="none" stroke="#1a2040" stroke-width="4" stroke-linejoin="round" opacity=".55"/><path d="M-.3 5h8.600L4 9.900z" fill="#1a2040" opacity=".55"/><path d="M8 13H14.300V2H4V6" fill="none" stroke="#f4dc1c" stroke-width="2.900" stroke-linejoin="round"/><path d="M.3 5.300h7.400L4 9.300z" fill="#f4dc1c"/><path d="M8 12.500H13.800V2.500H4.500V6" fill="none" stroke="#fdf06a" stroke-width="1" stroke-linejoin="round" opacity=".8"/><circle cx="4" cy="12.900" r="2.900" fill="url(#bb)"/></svg>
<div style="left:352px;top:129px;width:1102px;height:950px;background:#3b3b3b;border:1px solid #595959;"></div>
<div style="left:352px;top:90px;width:98px;height:40px;background:linear-gradient(#404040,#393939);border:1px solid #595959;border-bottom:none;"></div>
<div style="left:360px;top:96px;width:48px;height:27px;background:#fff;"></div>
<svg style="left:417px;top:102px;" width="15" height="15" viewBox="0 0 15 15"><rect x=".5" y=".5" width="14" height="14" rx="2.500" fill="#2e2e2e" stroke="#262626"/><path d="M4 4l7 7M11 4l-7 7" stroke="#1a1a1a" stroke-width="2.400" stroke-linecap="round"/></svg>
<div style="left:357px;top:130px;width:1092px;height:948px;background:#454545;"></div>
<div class="pk" style="left:412px;top:317px;width:960px;height:540px;"></div>
<div class="gr" style="left:412px;top:317px;width:960px;height:540px;"></div>
<div style="left:892px;top:131px;width:1px;height:899px;background:repeating-linear-gradient(180deg,#000 0 2px,#12c6f5 2px 6px,#000 6px 8px);"></div>
<div style="left:419px;top:569px;width:474px;height:3px;background:#fff;border-top:1px solid rgba(0,0,0,.44);border-bottom:1px solid rgba(0,0,0,.44);background-clip:padding-box;"></div>
<div style="left:410px;top:561px;width:3px;height:18px;background:rgba(8,12,28,.8);border-radius:1px;"></div>
<div style="left:402px;top:569px;width:18px;height:3px;background:rgba(8,12,28,.8);border-radius:1px;"></div>
<div style="left:411px;top:562px;width:1px;height:16px;background:#e8b830;"></div>
<div style="left:403px;top:570px;width:16px;height:1px;background:#e8b830;"></div>
<div style="left:891px;top:561px;width:3px;height:18px;background:rgba(0,0,0,.7);border-radius:1px;"></div>
<div style="left:883px;top:569px;width:18px;height:3px;background:rgba(0,0,0,.7);border-radius:1px;"></div>
<div style="left:892px;top:562px;width:1px;height:16px;background:#e8eef0;"></div>
<div style="left:884px;top:570px;width:16px;height:1px;background:#f4f4f4;"></div>
<div style="left:1432px;top:150px;width:15px;height:880px;background:#222;"></div>
<div style="left:1432px;top:150px;width:15px;height:872px;background:#5c5c5c;border:1px solid #222;border-radius:3px;"></div>
<div style="left:376px;top:1031px;width:1056px;height:15px;background:#222;"></div>
<div style="left:378px;top:1031px;width:1054px;height:15px;background:#5c5c5c;border:1px solid #222;border-radius:3px;"></div>
<svg style="left:1434px;top:134px;" width="13" height="12" viewBox="0 0 13 12"><rect x=".5" y=".5" width="12" height="11" fill="#eaeaea" stroke="#2a5a9a" stroke-dasharray="1 1"/><circle cx="6.200" cy="5.500" r="3.200" fill="#fff" stroke="#888" stroke-width="1.300"/><path d="M8.500 8l2.500 2.500" stroke="#777" stroke-width="1.600"/></svg>
<svg style="left:360px;top:1033px;" width="12" height="12" viewBox="0 0 12 12"><rect x=".5" y=".5" width="11" height="11" fill="none" stroke="#d8d8d8" stroke-dasharray="3 1"/></svg>
<svg style="left:1434px;top:1032px;" width="14" height="14" viewBox="0 0 14 14"><path d="M7 0l3 3.200H8V6h2.800V4L14 7l-3.200 3V8H8v2.800h2L7 14l-3-3.200h2V8H3.200v2L0 7l3.200-3v2H6V3.200H4z" fill="#2a5298"/></svg>
<span class="t" style="top:1051.80px;font-size:14px;line-height:20px;color:#888888;letter-spacing:0.246px;left:368.5px;">1280.0, -80.0</span>
<div style="left:465px;top:1049px;width:53px;height:28px;background:#2b2b2b;border:1px solid #171717;border-radius:3.5px;"></div>
<span class="t" style="top:1051.80px;font-size:13.6px;line-height:20px;color:#dcdcdc;letter-spacing:1.000px;left:472px;">px</span>
<svg style="left:499.0px;top:1059.25px;" width="12" height="6.5" viewBox="0 0 12 6.5"><path d="M.6 .6L6.0 5.7L11.4 .6" fill="none" stroke="#e4e4e4" stroke-width="1.7"/></svg>
<div style="left:519px;top:1049px;width:43px;height:28px;background:#3b3b3b;"></div>
<div style="left:523px;top:1056px;width:35px;height:14px;background:#222;"></div>
<span class="t" style="top:1052.00px;font-size:12px;line-height:20px;color:#dcdcdc;letter-spacing:-0.367px;left:531.61px;">50 %</span>
<div style="left:562px;top:1049px;width:20px;height:28px;background:#2b2b2b;border:1px solid #171717;border-radius:3.5px;"></div>
<svg style="left:566.0px;top:1059.25px;" width="12" height="6.5" viewBox="0 0 12 6.5"><path d="M.6 .6L6.0 5.7L11.4 .6" fill="none" stroke="#e4e4e4" stroke-width="1.7"/></svg>
<div style="left:585px;top:1055px;width:14.5px;height:14px;background:linear-gradient(90deg,#333,#eee);border:1px solid #d8d8d8;"></div>
<span class="t" style="top:1051.80px;font-size:14px;line-height:20px;color:#e2e2e2;letter-spacing:0.364px;left:601.8px;">962.0 pixels, 0.00°. Gradient: 962.0, 0.0 (Alt to move the whole line)</span>
<div style="left:1218px;top:141px;width:203px;height:156px;background:#454545;border:1px solid #d6d6d6;border-radius:7px;"></div>
<div style="left:1224.5px;top:149.5px;width:15px;height:15px;background:linear-gradient(90deg,#4a4a4a,#d8d8d8);border:1px solid #d8d8d8;"></div>
<span class="t" style="top:145.80px;font-size:14px;line-height:20px;color:#e0e0e0;letter-spacing:1.140px;font-weight:bold;-webkit-text-stroke:0.3px #e0e0e0;left:1250px;">Start Endpoint</span>
<svg style="left:1376px;top:150.3px;" width="10" height="12" viewBox="0 0 10 12"><path d="M1 7.500L5 .8l4 6.700z" fill="#0a0a0a"/><path d="M0 10.800h10" stroke="#5e5e5e" stroke-width="1.400"/></svg>
<svg style="left:1399px;top:151px;" width="11" height="11" viewBox="0 0 11 11"><rect x=".5" y=".5" width="10" height="10" rx="2" fill="#3a3a3a" stroke="#2a2a2a"/><path d="M3 3l5 5M8 3l-5 5" stroke="#1c1c1c" stroke-width="1.900" stroke-linecap="round"/></svg>
<span class="t" style="top:179.80px;font-size:14px;line-height:20px;color:#dcdcdc;letter-spacing:0.195px;left:1223.8px;">X:</span>
<span class="t" style="top:219.80px;font-size:14px;line-height:20px;color:#dcdcdc;letter-spacing:-0.797px;left:1223.8px;">Y:</span>
<span class="t" style="top:257.80px;font-size:14px;line-height:20px;color:#dcdcdc;letter-spacing:0.284px;left:1223.8px;">Color:</span>
<div style="left:1268px;top:173px;width:88px;height:34px;background:#3b3b3b;"></div>
<div style="left:1272px;top:177px;width:66px;height:26px;background:#222;"></div>
<div style="left:1338px;top:174px;width:17.5px;height:15.5px;background:#2b2b2b;"></div>
<div style="left:1338px;top:190.5px;width:17.5px;height:15.5px;background:#2b2b2b;"></div>
<svg style="left:1343px;top:179px;" width="8" height="5" viewBox="0 0 8 5"><path d="M0 5L4 .5 8 5z" fill="#e0e0e0"/></svg>
<svg style="left:1343px;top:196px;" width="8" height="5" viewBox="0 0 8 5"><path d="M0 0l4 4.500L8 0z" fill="#e0e0e0"/></svg>
<span class="t" style="top:179.40px;font-size:14px;line-height:20px;color:#dcdcdc;letter-spacing:0.422px;left:1279px;">-2</span>
<div style="left:1268px;top:211px;width:88px;height:34px;background:#3b3b3b;"></div>
<div style="left:1272px;top:215px;width:66px;height:26px;background:#222;"></div>
<div style="left:1338px;top:212px;width:17.5px;height:15.5px;background:#2b2b2b;"></div>
<div style="left:1338px;top:228.5px;width:17.5px;height:15.5px;background:#2b2b2b;"></div>
<svg style="left:1343px;top:217px;" width="8" height="5" viewBox="0 0 8 5"><path d="M0 5L4 .5 8 5z" fill="#e0e0e0"/></svg>
<svg style="left:1343px;top:234px;" width="8" height="5" viewBox="0 0 8 5"><path d="M0 0l4 4.500L8 0z" fill="#e0e0e0"/></svg>
<span class="t" style="top:217.40px;font-size:14px;line-height:20px;color:#dcdcdc;letter-spacing:0.698px;left:1279px;">506</span>
<div style="left:1360px;top:211px;width:53px;height:34px;background:#2b2b2b;border:1px solid #171717;border-radius:3.5px;"></div>
<span class="t" style="top:217.80px;font-size:13.4px;line-height:20px;color:#dcdcdc;letter-spacing:1.102px;left:1367px;">px</span>
<svg style="left:1394.0px;top:224.25px;" width="12" height="6.5" viewBox="0 0 12 6.5"><path d="M.6 .6L6.0 5.7L11.4 .6" fill="none" stroke="#e4e4e4" stroke-width="1.7"/></svg>
<div style="left:1266px;top:253px;width:74px;height:32px;background:#2b2b2b;border:1px solid #171717;border-radius:3.5px;"></div>
<div style="left:1270px;top:257px;width:66.5px;height:24px;background:#e3e3e3;"></div>
<div style="left:1342px;top:253px;width:73px;height:32px;background:#2b2b2b;border:1px solid #171717;border-radius:3.5px;"></div>
<span class="t" style="top:257.80px;font-size:14px;line-height:20px;color:#dcdcdc;letter-spacing:-0.727px;left:1353px;">FG</span>
<svg style="left:1396.0px;top:264.75px;" width="12" height="6.5" viewBox="0 0 12 6.5"><path d="M.6 .6L6.0 5.7L11.4 .6" fill="none" stroke="#e4e4e4" stroke-width="1.7"/></svg>
<div style="left:1463px;top:117px;width:457px;height:562px;background:#3b3b3b;border:1px solid #595959;"></div>
<div style="left:1463px;top:90px;width:70px;height:28px;background:linear-gradient(#454545,#3d3d3d);border:1px solid #595959;border-bottom:none;"></div>
<div style="left:1533px;top:93px;width:129px;height:24px;background:#232323;"></div>
<svg style="left:1469px;top:97px;" width="17" height="15" viewBox="0 0 17 15"><g stroke="#8a8a8a" stroke-width=".5"><path d="M3 10.500h12l-2 4H1z" fill="#d8d8d8"/><path d="M3 7.500h12l-2 4H1z" fill="#e4e4e4"/><path d="M3 4.500h12l-2 4H1z" fill="#ededed"/><path d="M3.500 .8h12l-2.500 4.500H1z" fill="#f8f8f8"/></g></svg>
<span class="t" style="top:94.00px;font-size:11.8px;line-height:20px;color:#e4e4e4;letter-spacing:0.372px;left:1486.7px;">Layers</span>
<svg style="left:1536px;top:97.5px;" width="14" height="15" viewBox="0 0 14 15"><path d="M7.500 9.500q2 .5 3 2.500 1.500-.5 2.500-3 .5 3-.5 4.500-1.500 1.500-3.500 1-1.500-.5-2-2z" fill="#6e664c"/><circle cx="10.300" cy="12" r=".8" fill="#b8b09a"/><circle cx="5.500" cy="5.500" r="5" fill="#4a86d8" stroke="#2f63ae" stroke-width=".7"/><path d="M3.900 4.300q0-1.700 1.700-1.700t1.700 1.400q0 1-1.700 1.800v.9M5.600 8v1.100" stroke="#fff" stroke-width="1.300" fill="none"/></svg>
<span class="t" style="top:95.00px;font-size:11.8px;line-height:20px;color:#e4e4e4;letter-spacing:0.579px;left:1552.5px;">Document History</span>
<svg style="left:1901px;top:98px;" width="11" height="11" viewBox="0 0 11 11"><rect x=".5" y=".5" width="10" height="10" rx="1.500" fill="none" stroke="#2a2a2a"/><path d="M7.800 2.700v5.600l-4.800-2.800z" fill="#2a2a2a"/></svg>
<div style="left:1469px;top:120px;width:397px;height:28px;background:#2b2b2b;border:1px solid #171717;border-radius:3.5px;"></div>
<span class="t" style="top:124.00px;font-size:11.8px;line-height:20px;color:#dcdcdc;letter-spacing:0.371px;left:1476px;">Mode</span>
<span class="t" style="top:124.00px;font-size:11.8px;line-height:20px;color:#dcdcdc;letter-spacing:0.523px;left:1798.33px;">Normal</span>
<svg style="left:1846.5px;top:131.05px;" width="12" height="6.5" viewBox="0 0 12 6.5"><path d="M.6 .6L6.0 5.7L11.4 .6" fill="none" stroke="#e4e4e4" stroke-width="1.7"/></svg>
<div style="left:1868px;top:120px;width:46px;height:28px;background:#2b2b2b;border:1px solid #171717;border-radius:3.5px;"></div>
<svg style="left:1894.5px;top:131.05px;" width="12" height="6.5" viewBox="0 0 12 6.5"><path d="M.6 .6L6.0 5.7L11.4 .6" fill="none" stroke="#e4e4e4" stroke-width="1.7"/></svg>
<svg style="left:1873.3px;top:125.7px;" width="16" height="16" viewBox="0 0 16 16"><defs><radialGradient id="bb" cx=".4" cy=".35" r=".7"><stop offset="0" stop-color="#9cbcea"/><stop offset=".5" stop-color="#3f74c0"/><stop offset="1" stop-color="#1f4a90"/></radialGradient></defs><path d="M8 13H14.300V2H4V6" fill="none" stroke="#1a2040" stroke-width="4" stroke-linejoin="round" opacity=".55"/><path d="M-.3 5h8.600L4 9.900z" fill="#1a2040" opacity=".55"/><path d="M8 13H14.300V2H4V6" fill="none" stroke="#f4dc1c" stroke-width="2.900" stroke-linejoin="round"/><path d="M.3 5.300h7.400L4 9.300z" fill="#f4dc1c"/><path d="M8 12.500H13.800V2.500H4.500V6" fill="none" stroke="#fdf06a" stroke-width="1" stroke-linejoin="round" opacity=".8"/><circle cx="4" cy="12.900" r="2.900" fill="url(#bb)"/></svg>
<div style="left:1469px;top:149px;width:445px;height:23px;background:#555555;border:1px solid #878787;"></div>
<div style="left:1898px;top:150px;width:15px;height:21px;background:#3a3a3a;"></div>
<span class="t" style="top:149.60px;font-size:11.8px;line-height:20px;color:#dcdcdc;letter-spacing:0.538px;left:1471px;">Opacity</span>
<span class="t" style="top:149.60px;font-size:11.8px;line-height:20px;color:#dcdcdc;letter-spacing:0.609px;left:1858.42px;">100.0</span>
<svg style="left:1901.5px;top:153.25px;" width="8" height="5" viewBox="0 0 8 5"><path d="M.7 4.300L4 1l3.300 3.300" fill="none" stroke="#7a7a7a" stroke-width="2"/></svg>
<svg style="left:1901.5px;top:162.75px;" width="8" height="5" viewBox="0 0 8 5"><path d="M.7 .7L4 4l3.300-3.300" fill="none" stroke="#e0e0e0" stroke-width="2"/></svg>
<span class="t" style="top:178.70px;font-size:11.8px;line-height:20px;color:#dcdcdc;letter-spacing:0.316px;left:1468.7px;">Lock:</span>
<svg style="left:1507px;top:183px;" width="16" height="15" viewBox="0 0 16 15"><path d="M.3 13.800q3-1.500 4.500-4.800l3.700 2.800q-2.500 3.200-8.200 2z" fill="#050505"/><circle cx="5.300" cy="10.800" r=".9" fill="#bbb"/><path d="M5 8.800l4.200-5.300 3.800 2.700-4.300 5.400z" fill="#dadada" stroke="#9a9a9a" stroke-width=".5"/><path d="M6.800 8.200l3.200-4" stroke="#fff" stroke-width="1.100"/><path d="M9.200 3.500l1.600-2.300 4 2.600-1.800 2.400z" fill="#d98a2b"/></svg>
<svg style="left:1540px;top:181px;" width="15" height="15" viewBox="0 0 15 15"><path d="M7.500 .7L10.100 3.500H8.400V6.600H11.500V4.900L14.300 7.500 11.500 10.100V8.400H8.400V11.500H10.100L7.500 14.300 4.900 11.500H6.600V8.400H3.500V10.100L.7 7.500 3.500 4.900V6.600H6.600V3.500H4.900z" fill="#78a8e4" stroke="#2356a4" stroke-width=".9"/></svg>
<div style="left:1573px;top:181px;width:16px;height:16px;background:repeating-conic-gradient(#6c6c6c 0 25%,#9c9c9c 0 50%) 0 0/8px 8px;"></div>
<div style="left:1469px;top:207px;width:445px;height:436px;background:#303030;border-radius:2px;"></div>
<div style="left:1470px;top:208px;width:443px;height:77px;background:#202020;"></div>
<svg style="left:1475.5px;top:241.5px;" width="18" height="10" viewBox="0 0 18 10"><defs><radialGradient id="eg" cx=".5" cy=".45" r=".6"><stop offset="0" stop-color="#fff"/><stop offset=".55" stop-color="#ececec"/><stop offset="1" stop-color="#8e8e8e"/></radialGradient></defs><path d="M.3 5.200Q4 .4 9 .4t8.700 4.800Q14 9.600 9 9.600T.3 5.200z" fill="url(#eg)"/><circle cx="9" cy="4.600" r="3.200" fill="#3a62b4"/><circle cx="9" cy="4.600" r="1.700" fill="#0c1430"/><circle cx="8" cy="3.500" r="1.200" fill="#fff"/></svg>
<div style="left:1550px;top:208px;width:132px;height:75.5px;background:#fff;border:2px solid #000;"></div>
<div style="left:1684px;top:207.5px;width:132px;height:76.5px;background:#fff;"></div>
<span class="t" style="top:235.50px;font-size:11.8px;line-height:20px;color:#dcdcdc;letter-spacing:0.719px;left:1820px;">white</span>
<svg style="left:1475.5px;top:319.5px;" width="18" height="10" viewBox="0 0 18 10"><defs><radialGradient id="eg" cx=".5" cy=".45" r=".6"><stop offset="0" stop-color="#fff"/><stop offset=".55" stop-color="#ececec"/><stop offset="1" stop-color="#8e8e8e"/></radialGradient></defs><path d="M.3 5.200Q4 .4 9 .4t8.700 4.800Q14 9.600 9 9.600T.3 5.200z" fill="url(#eg)"/><circle cx="9" cy="4.600" r="3.200" fill="#3a62b4"/><circle cx="9" cy="4.600" r="1.700" fill="#0c1430"/><circle cx="8" cy="3.500" r="1.200" fill="#fff"/></svg>
<div style="left:1550px;top:286px;width:132px;height:76px;background:#000;"></div>
<svg style="left:1552px;top:288px;overflow:hidden;" width="128" height="72" viewBox="0 0 128 72"><defs><pattern id="ck" width="8.258" height="8.258" patternUnits="userSpaceOnUse"><rect width="8.258" height="8.258" fill="#b98889"/><rect x="4.129" width="4.129" height="4.129" fill="#316f49"/><rect y="4.129" width="4.129" height="4.129" fill="#316f49"/></pattern></defs><rect width="128" height="72" fill="url(#ck)"/></svg>
<span class="t" style="top:313.70px;font-size:11.8px;line-height:20px;color:#e0e0e0;letter-spacing:0.773px;font-weight:bold;-webkit-text-stroke:0.25px #e0e0e0;left:1686px;">Background</span>
<svg style="left:1488px;top:650.5px;" width="16" height="17" viewBox="0 0 16 17"><g opacity="1"><path d="M2.500 2.500h8.500l3.500 3.500v10.500h-12z" fill="#eeeeec" stroke="#fff" stroke-width=".6"/><path d="M11 2.500v3.500h3.500z" fill="#c8c8c8"/><path d="M3.500 .5v6M.5 3.500h6" stroke="#0a0a0a" stroke-width="1.700"/></g></svg>
<svg style="left:1542px;top:650.5px;" width="17" height="17" viewBox="0 0 17 17"><path d="M3.500 6.500h5l1.500 1.500h6.500v8.500h-13z" fill="#6ea0dc" stroke="#3a6cb0" stroke-width=".7"/><path d="M3.500 9.500h13" stroke="#a8c8f0" stroke-width=".8"/><path d="M3.500 .5v6M.5 3.500h6" stroke="#0a0a0a" stroke-width="1.700"/></svg>
<svg style="left:1598.5px;top:656px;" width="14" height="8" viewBox="0 0 14 8"><path d="M1 7L7 1.500 13 7" fill="none" stroke="#e0a070" stroke-width="2" opacity="1"/></svg>
<svg style="left:1653.5px;top:656px;" width="14" height="8" viewBox="0 0 14 8"><path d="M1 1L7 6.500 13 1" fill="none" stroke="#f57900" stroke-width="2.200" opacity="1"/></svg>
<svg style="left:1708px;top:651.5px;" width="16" height="16" viewBox="0 0 16 16"><g opacity="1"><rect x="4.500" y="4.500" width="11" height="11" fill="#2e3a50" stroke="#e8e8e8"/><rect x=".5" y=".5" width="11" height="11" fill="#3b4a66" stroke="#e8e8e8"/><path d="M2 8l2.500-3 2 2 1.500-1.500 2 2.500z" fill="#8fb3e6"/><rect x="2" y="2" width="8" height="3" fill="#6f8fc4"/></g></svg>
<svg style="left:1762px;top:653.5px;" width="17" height="13" viewBox="0 0 17 13"><g stroke="#888" stroke-width=".4"><path d="M3 7.500h9l-2 3H1z" fill="#d0d0d0"/><path d="M3 5h9l-2 3H1z" fill="#e4e4e4"/><path d="M3.500 2.500h9l-2.500 3H1z" fill="#f6f6f6"/></g><path d="M14.500 1v7M13 6.500l1.500 2 1.500-2" stroke="#2a4a80" stroke-width="1" fill="none"/></svg>
<svg style="left:1817px;top:651.5px;" width="17" height="16" viewBox="0 0 17 16"><rect x=".5" y=".5" width="10" height="10" fill="#d8dcd4" stroke="#eee" stroke-width=".6"/><path d="M3 3.500q2.500-2 4.500 0 .5 3-2 3.500-2.800-.5-2.500-3.500z" fill="#9a9a92"/><path d="M5.500 8.500h10l-2 6.500h-10z" fill="#e8e8e4" stroke="#aaa" stroke-width=".5"/><path d="M7 11l3 1.500 3-1.500" stroke="#aaa" fill="none" stroke-width=".8"/></svg>
<svg style="left:1878px;top:654px;" width="12" height="12" viewBox="0 0 12 12"><path d="M1.200 1.200l9.600 9.600M10.800 1.200l-9.600 9.600" stroke="#cc0000" stroke-width="3.1" opacity="1"/></svg>
<div style="left:1682px;top:681px;width:4px;height:4px;background:#a6a6a6;border-radius:2px;"></div>
<div style="left:1689px;top:681px;width:4px;height:4px;background:#a6a6a6;border-radius:2px;"></div>
<div style="left:1696px;top:681px;width:4px;height:4px;background:#a6a6a6;border-radius:2px;"></div>
<div style="left:1463px;top:716px;width:457px;height:363px;background:#3b3b3b;border:1px solid #595959;"></div>
<div style="left:1463px;top:689px;width:84px;height:28px;background:linear-gradient(#454545,#3d3d3d);border:1px solid #595959;border-bottom:none;"></div>
<div style="left:1547px;top:692px;width:58px;height:24px;background:#232323;"></div>
<div style="left:1606px;top:692px;width:85px;height:24px;background:#232323;"></div>
<svg style="left:1469px;top:696px;" width="16" height="16" viewBox="0 0 16 16"><path d="M3 11.500h11l-2 3.500H1z" fill="#3465a4"/><path d="M3 8.500h11l-2 3.500H1z" fill="#4e9a06"/><path d="M3.500 1h11.500l-3 8H1z" fill="#ef2929" stroke="#a40000" stroke-width=".5"/><path d="M4 2h10" stroke="#f8a0a0" stroke-width=".8"/></svg>
<span class="t" style="top:693.00px;font-size:11.8px;line-height:20px;color:#e4e4e4;letter-spacing:0.350px;left:1487.5px;">Channels</span>
<svg style="left:1549px;top:697px;" width="15" height="15" viewBox="0 0 15 15"><path d="M1 14q1-9 7-9 4 0 5 5" fill="none" stroke="#1f3f6f" stroke-width="1.200"/><path d="M3 5l8-4" stroke="#556" stroke-width="1"/><circle cx="7.500" cy="5" r="1" fill="#9ab"/><path d="M9 10l3 3" stroke="#345" stroke-width="1"/></svg>
<span class="t" style="top:694.00px;font-size:11.8px;line-height:20px;color:#e4e4e4;letter-spacing:0.150px;left:1567px;">Paths</span>
<svg style="left:1608px;top:696px;" width="16" height="16" viewBox="0 0 16 16"><rect x=".5" y=".5" width="15" height="15" fill="#f4f4f4" stroke="#fff"/><path d="M2 13.500h12" stroke="#333" stroke-width="1"/><path d="M3 13V4l1.500 4 1.500 2.500 2 1 1.500-2 1.500 2 2 .5v1z" fill="#2a5aa8"/></svg>
<span class="t" style="top:694.00px;font-size:11.8px;line-height:20px;color:#e4e4e4;letter-spacing:0.583px;left:1626px;">Histogram</span>
<svg style="left:1901px;top:697px;" width="11" height="11" viewBox="0 0 11 11"><rect x=".5" y=".5" width="10" height="10" rx="1.500" fill="none" stroke="#2a2a2a"/><path d="M7.800 2.700v5.600l-4.800-2.800z" fill="#2a2a2a"/></svg>
<div style="left:1469px;top:719px;width:445px;height:106px;background:#303030;border-radius:2px;"></div>
<div style="left:1470px;top:720px;width:443px;height:104px;background:#202020;"></div>
<svg style="left:1477.5px;top:728.3px;" width="18" height="10" viewBox="0 0 18 10"><defs><radialGradient id="eg" cx=".5" cy=".45" r=".6"><stop offset="0" stop-color="#fff"/><stop offset=".55" stop-color="#ececec"/><stop offset="1" stop-color="#8e8e8e"/></radialGradient></defs><path d="M.3 5.200Q4 .4 9 .4t8.700 4.800Q14 9.600 9 9.600T.3 5.200z" fill="url(#eg)"/><circle cx="9" cy="4.600" r="3.200" fill="#3a62b4"/><circle cx="9" cy="4.600" r="1.700" fill="#0c1430"/><circle cx="8" cy="3.500" r="1.200" fill="#fff"/></svg>
<div style="left:1507px;top:723.3px;width:34px;height:20px;background:#fff;border:1px solid #000;"></div>
<span class="t" style="top:723.30px;font-size:11.8px;line-height:20px;color:#dcdcdc;letter-spacing:-0.010px;left:1548.6px;">Red</span>
<svg style="left:1477.5px;top:754.3px;" width="18" height="10" viewBox="0 0 18 10"><defs><radialGradient id="eg" cx=".5" cy=".45" r=".6"><stop offset="0" stop-color="#fff"/><stop offset=".55" stop-color="#ececec"/><stop offset="1" stop-color="#8e8e8e"/></radialGradient></defs><path d="M.3 5.200Q4 .4 9 .4t8.700 4.800Q14 9.600 9 9.600T.3 5.200z" fill="url(#eg)"/><circle cx="9" cy="4.600" r="3.200" fill="#3a62b4"/><circle cx="9" cy="4.600" r="1.700" fill="#0c1430"/><circle cx="8" cy="3.500" r="1.200" fill="#fff"/></svg>
<div style="left:1507px;top:749.3px;width:34px;height:20px;background:#fff;border:1px solid #000;"></div>
<span class="t" style="top:749.30px;font-size:11.8px;line-height:20px;color:#dcdcdc;letter-spacing:0.331px;left:1548.6px;">Green</span>
<svg style="left:1477.5px;top:780.3px;" width="18" height="10" viewBox="0 0 18 10"><defs><radialGradient id="eg" cx=".5" cy=".45" r=".6"><stop offset="0" stop-color="#fff"/><stop offset=".55" stop-color="#ececec"/><stop offset="1" stop-color="#8e8e8e"/></radialGradient></defs><path d="M.3 5.200Q4 .4 9 .4t8.700 4.800Q14 9.600 9 9.600T.3 5.200z" fill="url(#eg)"/><circle cx="9" cy="4.600" r="3.200" fill="#3a62b4"/><circle cx="9" cy="4.600" r="1.700" fill="#0c1430"/><circle cx="8" cy="3.500" r="1.200" fill="#fff"/></svg>
<div style="left:1507px;top:775.3px;width:34px;height:20px;background:#fff;border:1px solid #000;"></div>
<span class="t" style="top:775.30px;font-size:11.8px;line-height:20px;color:#dcdcdc;letter-spacing:0.387px;left:1548.6px;">Blue</span>
<svg style="left:1477.5px;top:806.3px;" width="18" height="10" viewBox="0 0 18 10"><defs><radialGradient id="eg" cx=".5" cy=".45" r=".6"><stop offset="0" stop-color="#fff"/><stop offset=".55" stop-color="#ececec"/><stop offset="1" stop-color="#8e8e8e"/></radialGradient></defs><path d="M.3 5.200Q4 .4 9 .4t8.700 4.800Q14 9.600 9 9.600T.3 5.200z" fill="url(#eg)"/><circle cx="9" cy="4.600" r="3.200" fill="#3a62b4"/><circle cx="9" cy="4.600" r="1.700" fill="#0c1430"/><circle cx="8" cy="3.500" r="1.200" fill="#fff"/></svg>
<div style="left:1507px;top:801.3px;width:34px;height:20px;background:#fff;border:1px solid #000;"></div>
<span class="t" style="top:801.30px;font-size:11.8px;line-height:20px;color:#dcdcdc;letter-spacing:0.431px;left:1548.6px;">Alpha</span>
<span class="t" style="top:831.70px;font-size:11.8px;line-height:20px;color:#9a9a9a;letter-spacing:0.316px;left:1468.7px;">Lock:</span>
<svg style="left:1507px;top:836px;" width="16" height="15" viewBox="0 0 16 15"><g opacity=".6"><path d="M.5 14.500q2-.5 3.500-3l3 2q-2 2-6.500 1z" fill="#111"/><path d="M4 11.500l5.500-7 3 2-5.500 7z" fill="#bbb"/><path d="M9.500 4.500l2-3 3.500 2-2.500 3z" fill="#b08050"/></g></svg>
<svg style="left:1540px;top:834.5px;" width="15" height="15" viewBox="0 0 15 15"><g opacity=".55"><path d="M7.500 .7L10.100 3.500H8.400V6.600H11.500V4.900L14.300 7.500 11.500 10.100V8.400H8.400V11.500H10.100L7.500 14.300 4.900 11.500H6.600V8.400H3.500V10.100L.7 7.500 3.500 4.900V6.600H6.600V3.500H4.900z" fill="#9ab4dc" stroke="#5a78b0" stroke-width="1"/></g></svg>
<div style="left:1469px;top:859px;width:445px;height:185px;background:#303030;border-radius:2px;"></div>
<svg style="left:1497px;top:1052px;" width="16" height="17" viewBox="0 0 16 17"><g opacity="1"><path d="M2.500 2.500h8.500l3.500 3.500v10.500h-12z" fill="#eeeeec" stroke="#fff" stroke-width=".6"/><path d="M11 2.500v3.500h3.500z" fill="#c8c8c8"/><path d="M3.500 .5v6M.5 3.500h6" stroke="#0a0a0a" stroke-width="1.700"/></g></svg>
<svg style="left:1571.5px;top:1057.5px;" width="14" height="8" viewBox="0 0 14 8"><path d="M1 7L7 1.500 13 7" fill="none" stroke="#d8a878" stroke-width="2" opacity="0.9"/></svg>
<svg style="left:1645.5px;top:1057.5px;" width="14" height="8" viewBox="0 0 14 8"><path d="M1 1L7 6.500 13 1" fill="none" stroke="#d8a878" stroke-width="2.200" opacity="0.9"/></svg>
<svg style="left:1719px;top:1053px;" width="16" height="16" viewBox="0 0 16 16"><g opacity="0.55"><rect x="4.500" y="4.500" width="11" height="11" fill="#2e3a50" stroke="#e8e8e8"/><rect x=".5" y=".5" width="11" height="11" fill="#3b4a66" stroke="#e8e8e8"/><path d="M2 8l2.500-3 2 2 1.500-1.500 2 2.500z" fill="#8fb3e6"/><rect x="2" y="2" width="8" height="3" fill="#6f8fc4"/></g></svg>
<div style="left:1794px;top:1054px;width:15px;height:15px;background:#b07878;border:1px solid #c89090;"></div>
<svg style="left:1869.5px;top:1055.5px;" width="12" height="12" viewBox="0 0 12 12"><path d="M1.200 1.200l9.600 9.600M10.800 1.200l-9.600 9.600" stroke="#c05050" stroke-width="1.8" opacity="0.9"/></svg>
</body></html>
